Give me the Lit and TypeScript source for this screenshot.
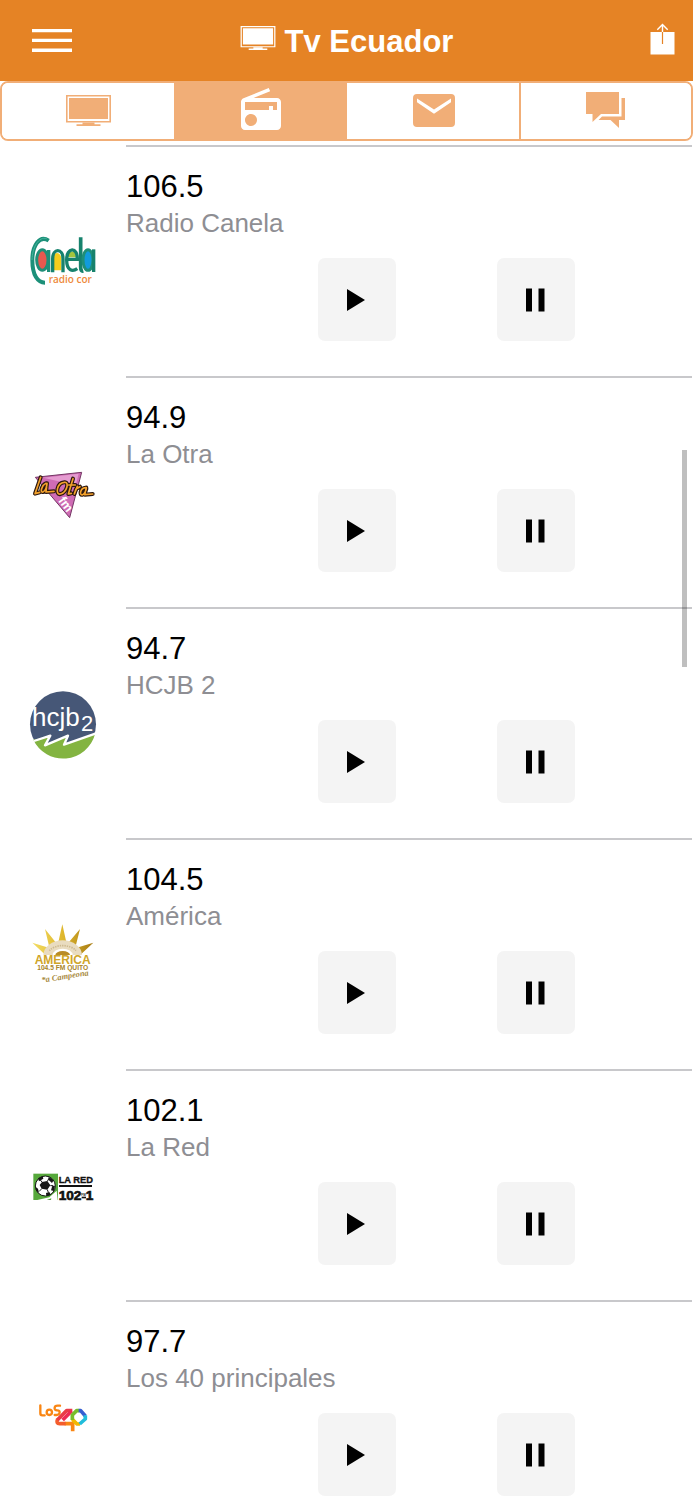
import { LitElement, html, css } from "lit";
import type { TemplateResult } from "lit";
import { customElement, property, state } from "lit/decorators.js";
import { classMap } from "lit/directives/class-map.js";

interface Station {
  freq: string;
  name: string;
  logo: TemplateResult;
}

const tvIcon = (className: string) => html`
  <svg class=${className} viewBox="0 0 45 31" aria-hidden="true">
    <path fill="none" stroke="currentColor" stroke-width="1.6" d="M.8.8h43.4v26H.8z" />
    <path fill="currentColor" d="M3 3h39v21H3zM16.5 27.5h12v1.7h6V31h-24v-1.8h6z" />
  </svg>
`;

const canelaLogo = html`
  <svg class="logo" viewBox="-6 -24 270 270" role="img" aria-label="Canela">
    <path fill="none" stroke="#1c9079" stroke-width="12" d="M86 50C58 32 37 66 37 108c0 46 16 68 38 68" />
    <path fill="none" stroke="#45b39c" stroke-width="3" d="M80 44C56 36 37 70 36 108" />
    <path fill="none" stroke="#1f8f78" stroke-width="10" d="M86 78v66" />
    <ellipse cx="67" cy="108" rx="17" ry="31" fill="#e8584f" stroke="#1f8f78" stroke-width="9" />
    <path fill="#f6cd1c" d="M98 139V106c0-25 26-25 26 0v33z" />
    <path fill="none" stroke="#17826d" stroke-width="10" d="M98 145V104c0-32 31-32 31 0v41" />
    <path fill="#a3c53d" d="M143 100c1-23 25-23 25 0z" />
    <path fill="none" stroke="#17826d" stroke-width="10" d="M143 106h29c1-38-32-38-32 2 0 32 17 36 32 26" />
    <path fill="none" stroke="#17826d" stroke-width="11" d="M182 40v90q0 13 8 11" />
    <ellipse cx="204" cy="108" rx="15" ry="31" fill="#119bdc" stroke="#1f8f78" stroke-width="9" />
    <path fill="none" stroke="#17826d" stroke-width="10" d="M221 76v68" />
    <text x="86" y="176" class="canela-sub">radio cor</text>
  </svg>
`;

const laOtraLogo = html`
  <svg class="logo" viewBox="-6 -38 270 270" role="img" aria-label="La Otra FM">
    <path fill="#cf6cb5" stroke="#733663" stroke-width="3" d="M46 53l139-15-36 136z" />
    <path fill="#e59bd0" d="M70 54l106-12-9 35z" />
    <g fill="none" stroke-linecap="round" stroke-linejoin="round">
      <g stroke="#2b160e" stroke-width="12">
        <path d="M62 53l-17 49 14-4M78 71c-13 6-19 28-9 26 8-2 12-19 12-26l-3 26 24-2" />
        <path d="M133 68c-24 2-27 39-12 35 20-4 28-38 12-35M159 57l-14 46 9-2M146 76h20M172 80l-9 23 5-15 12-7M197 84c-17 1-20 25-9 21 8-3 12-19 11-21l-5 21 24-2" />
      </g>
      <g stroke="#f3a22d" stroke-width="5">
        <path d="M62 53l-17 49 14-4M78 71c-13 6-19 28-9 26 8-2 12-19 12-26l-3 26 24-2" />
        <path d="M133 68c-24 2-27 39-12 35 20-4 28-38 12-35M159 57l-14 46 9-2M146 76h20M172 80l-9 23 5-15 12-7M197 84c-17 1-20 25-9 21 8-3 12-19 11-21l-5 21 24-2" />
      </g>
    </g>
    <text class="otra-fm" transform="translate(113 123) rotate(53)">fm</text>
  </svg>
`;

const hcjbLogo = html`
  <svg class="logo" viewBox="-6 -5 270 270" role="img" aria-label="HCJB 2">
    <circle cx="129" cy="134" r="99" fill="#465777" />
    <path fill="#83b441" d="M40 180l51-10-15 28 68-29-12 28 93-33A99 99 0 0 1 40 180z" />
    <path fill="none" stroke="#fff" stroke-width="7" stroke-linejoin="round" d="M42 184l49-16-16 29 69-29-12 27 94-33" />
    <text x="36" y="138" class="hcjb">hcjb</text>
    <text x="183" y="153" class="hcjb-two">2</text>
  </svg>
`;

const americaLogo = html`
  <svg class="logo" viewBox="-6 -17 270 270" role="img" aria-label="América 104.5 FM Quito">
    <defs>
      <linearGradient id="gold" x1="0" x2="1">
        <stop offset="0" stop-color="#f3dc63" />
        <stop offset=".5" stop-color="#dfb72d" />
        <stop offset="1" stop-color="#a87c14" />
      </linearGradient>
    </defs>
    <g fill="url(#gold)">
      <path d="M127 29l13 58h-26zM75 43l36 45-22 14zM180 43l-15 59-23-14zM37 84l49 15-12 20zM220 84l-37 35-13-20z" />
    </g>
    <path fill="#e9dcc0" d="M70 121a58 44 0 0 1 116 0z" />
    <path fill="none" stroke="#cdb98f" stroke-width="5" stroke-dasharray="4 3" d="M88 108a46 30 0 0 1 80 0" />
    <path fill="#fff" d="M98 121a30 19 0 0 1 60 0z" />
    <path fill="#b98c27" d="M106 121a22 12 0 0 1 44 0z" />
    <text x="128" y="147" class="america">AMERICA</text>
    <text x="128" y="167" class="america-city">104.5 FM QUITO</text>
    <text class="america-tag" transform="translate(66 204) rotate(-9)">*a Campeona</text>
  </svg>
`;

const laRedLogo = html`
  <svg class="logo" viewBox="-6 -71 270 270" role="img" aria-label="La Red 102.1">
    <path fill="#56a83b" d="M40 30h74v79H40z" />
    <path fill="#fff" d="M52 109l36-8 22-20 3 28z" />
    <path fill="#56a83b" d="M80 109l14-5-1 5z" />
    <circle cx="76" cy="67" r="30" fill="#fff" stroke="#161616" stroke-width="3" />
    <path fill="#161616" d="M66 55l16-3 9 13-9 13-17-3-6-11zM54 44l14-7 2 8-13 8zM86 39l15 11-5 8-11-10zM105 66l-3 16-9-2 4-14zM78 88l10-3 4 8-13 4zM46 69l8 6 3 12-8-5z" />
    <path stroke="#161616" stroke-width="3" d="M82 53l5-9M91 66h8M82 78l3 8M65 76l-7 6M66 55l-5-6" />
    <path fill="#111" d="M117 64h99v6h-99z" />
    <text x="116" y="58" class="red-name">LA RED</text>
    <text x="116" y="108" class="red-freq">102</text>
    <text x="184" y="96" class="red-fm">FM</text>
    <path fill="#111" d="M185 99h13v5h-13z" />
    <text x="197" y="108" class="red-freq">1</text>
  </svg>
`;

const los40Logo = html`
  <svg class="logo" viewBox="-6 -68 270 270" role="img" aria-label="Los 40">
    <g fill="none" stroke-width="7" stroke-linejoin="round">
      <g stroke="#f98614">
        <path stroke-linecap="round" d="M61 35v24q0 6 6 6h7M120 36h-7c-12 0-12 14-2 14h1c11 0 8 14-2 14h-6" />
        <circle cx="88" cy="56" r="8" />
        <path stroke-width="11" d="M134 90h24v23" />
      </g>
      <g stroke-width="11">
        <path stroke="#f45e2d" d="M113 76q-6 14 6 14h18" />
        <path stroke="#ea3b47" d="M157 51h-17L112 79" />
        <path stroke="#ed2b53" d="M155 52L128 79" />
        <path stroke="#f2b700" d="M180 91h-9l-14-14" />
        <path stroke="#77bd2a" d="M157 79V64l13-13h8" />
        <path stroke="#355ed1" d="M176 51h6l14 16" />
        <path stroke="#20bddb" d="M196 65v11l-17 15" />
      </g>
    </g>
  </svg>
`;

const STATIONS: Station[] = [
  { freq: "106.5", name: "Radio Canela", logo: canelaLogo },
  { freq: "94.9", name: "La Otra", logo: laOtraLogo },
  { freq: "94.7", name: "HCJB 2", logo: hcjbLogo },
  { freq: "104.5", name: "América", logo: americaLogo },
  { freq: "102.1", name: "La Red", logo: laRedLogo },
  { freq: "97.7", name: "Los 40 principales", logo: los40Logo },
];

const TABS = [
  { id: "tv", label: "Televisión", icon: tvIcon("tab-tv") },
  {
    id: "radio",
    label: "Radio",
    icon: html`<svg class="tab-radio" viewBox="0 0 24 24" aria-hidden="true">
      <path fill="currentColor" d="M3.24 6.15C2.51 6.43 2 7.17 2 8v12c0 1.1.89 2 2 2h16c1.11 0 2-.9 2-2V8c0-1.11-.89-2-2-2H8.3l8.26-3.34L15.88 1 3.24 6.15zM7 20c-1.66 0-3-1.34-3-3s1.34-3 3-3 3 1.34 3 3-1.34 3-3 3zm13-8h-2v-2h-2v2H4V8h16v4z" />
    </svg>`,
  },
  {
    id: "mail",
    label: "Correo",
    icon: html`<svg class="tab-mail" viewBox="0 0 42 33" aria-hidden="true">
      <path fill="currentColor" fill-rule="evenodd" d="M4 0h34a4 4 0 0 1 4 4v25a4 4 0 0 1-4 4H4a4 4 0 0 1-4-4V4a4 4 0 0 1 4-4zM4 4.500v3.800l17 11.400 17-11.400V4.500L21 15.600z" />
    </svg>`,
  },
  {
    id: "chat",
    label: "Mensajes",
    icon: html`<svg class="tab-chat" viewBox="0 0 39 36" aria-hidden="true">
      <path fill="currentColor" d="M0 0h33v22H15l-8.500 8V22H0zM35.500 6H39v22h-6v8l-8.500-8h-12l3.500-3.500h19.500z" />
    </svg>`,
  },
];

@customElement("station-row")
class StationRow extends LitElement {
  @property({ attribute: false }) station!: Station;

  static styles = css`
    :host {
      display: flex;
    }
    .avatar {
      flex: none;
      width: 126px;
      display: flex;
      align-items: center;
      justify-content: center;
    }
    .logo {
      width: 90px;
      height: 90px;
      display: block;
    }
    .body {
      flex: 1;
      margin-right: 1px;
      padding: 22px 0 35px;
      border-top: 2px solid #c8c8cb;
    }
    .freq {
      margin: 0 0 3px;
      font-size: 31px;
      line-height: 36px;
      font-weight: 400;
      color: #000;
    }
    .name {
      margin: 0 0 20px;
      font-size: 26px;
      line-height: 30px;
      color: #8e8e93;
    }
    .controls {
      display: flex;
      justify-content: center;
      gap: 101px;
      padding-left: 74px;
    }
    .control {
      width: 78px;
      height: 83px;
      padding: 0;
      border: 0;
      border-radius: 7px;
      background: #f4f4f4;
      color: #000;
      display: flex;
      align-items: center;
      justify-content: center;
    }
    .glyph {
      width: 20px;
      height: 24px;
    }
    .canela-sub {
      font: 600 30px "Open Sans", sans-serif;
      fill: #ee8a3c;
    }
    .otra-fm {
      font: 700 38px "Liberation Sans", sans-serif;
      fill: #fff;
    }
    .hcjb {
      font: 400 78px "Liberation Sans", sans-serif;
      fill: #fff;
    }
    .hcjb-two {
      font: 400 66px "Liberation Sans", sans-serif;
      fill: #fff;
    }
    .america {
      font: 700 36px "Liberation Sans", sans-serif;
      fill: #cfa528;
      text-anchor: middle;
    }
    .america-city {
      font: 700 20px "Liberation Sans", sans-serif;
      fill: #a98428;
      text-anchor: middle;
    }
    .america-tag {
      font: italic 700 25px "Liberation Serif", serif;
      fill: #a88a3e;
    }
    .red-name {
      font: 700 28px "Liberation Sans", sans-serif;
      fill: #111;
      stroke: #111;
      stroke-width: 1px;
    }
    .red-freq {
      font: 700 41px "Liberation Sans", sans-serif;
      fill: #111;
      stroke: #111;
      stroke-width: 2px;
    }
    .red-fm {
      font: 700 9px "Liberation Sans", sans-serif;
      fill: #111;
    }
  `;

  render() {
    const { freq, name, logo } = this.station;
    return html`
      <div class="avatar">${logo}</div>
      <div class="body">
        <h2 class="freq">${freq}</h2>
        <p class="name">${name}</p>
        <div class="controls">
          <button class="control" type="button" aria-label="Reproducir ${name}">
            <svg class="glyph" viewBox="0 0 20 24" aria-hidden="true">
              <path d="M0 1l18 11L0 23z" />
            </svg>
          </button>
          <button class="control" type="button" aria-label="Pausar ${name}">
            <svg class="glyph" viewBox="0 0 20 24" aria-hidden="true">
              <path d="M0 .5h6v23H0zM12.500 .5h6v23h-6z" />
            </svg>
          </button>
        </div>
      </div>
    `;
  }
}

@customElement("app-root")
class AppRoot extends LitElement {
  @state() private active = "radio";

  static styles = css`
    :host {
      display: flex;
      flex-direction: column;
      position: relative;
      height: 100vh;
      overflow: hidden;
      background: #fff;
      font-family: "Liberation Sans", Arial, sans-serif;
    }
    .bar {
      flex: none;
      display: grid;
      grid-template-columns: 72px 1fr 72px;
      align-items: center;
      height: 81px;
      background: #e58325;
      color: #fff;
    }
    .bar-button {
      height: 80px;
      padding: 0;
      border: 0;
      background: none;
      color: inherit;
      display: flex;
      align-items: center;
      justify-content: flex-end;
    }
    .share-button {
      padding: 0 18px 4px 0;
    }
    .menu-icon {
      width: 40px;
      height: 24px;
    }
    .share-icon {
      width: 25px;
      height: 32px;
    }
    .title {
      margin: 0;
      padding-top: 2px;
      display: flex;
      justify-content: center;
      align-items: center;
      gap: 9px;
      font-size: 31px;
      line-height: 36px;
      font-weight: 700;
    }
    .title-tv {
      width: 36px;
      height: 24px;
      margin-bottom: 8px;
    }
    .tabs {
      flex: none;
      display: grid;
      grid-template-columns: repeat(4, 1fr);
      height: 60px;
      box-sizing: border-box;
      margin-bottom: 4px;
      border: 2px solid #f1ae77;
      border-radius: 8px;
      overflow: hidden;
    }
    .tab {
      padding: 0 0 2px;
      border: 0;
      border-left: 2px solid #f1ae77;
      background: #fff;
      color: #f1ae77;
      display: flex;
      align-items: center;
      justify-content: center;
    }
    .tab:first-child {
      border-left: 0;
    }
    .tab.active {
      background: #f1ae77;
      color: #fff;
    }
    .tab.active + .tab {
      border-left-color: #fff;
    }
    .tab-tv {
      width: 45px;
      height: 31px;
    }
    .tab-radio {
      width: 48px;
      height: 48px;
    }
    .tab-mail {
      width: 42px;
      height: 33px;
    }
    .tab-chat {
      width: 39px;
      height: 36px;
    }
    .list {
      flex: 1;
      min-height: 0;
      margin: 0;
      padding: 0;
      list-style: none;
      overflow-y: auto;
      scrollbar-width: none;
    }
    .scroll-thumb {
      position: absolute;
      top: 30%;
      right: 6px;
      width: 5px;
      height: 217px;
      background: rgba(0, 0, 0, 0.25);
      pointer-events: none;
    }
  `;

  render() {
    return html`
      <header class="bar">
        <button class="bar-button" type="button" aria-label="Menú">
          <svg class="menu-icon" viewBox="0 0 40 24" aria-hidden="true">
            <path fill="currentColor" d="M0 0h40v3.300H0zM0 9.800h40v3.300H0zM0 19.600h40v3.300H0z" />
          </svg>
        </button>
        <h1 class="title">${tvIcon("title-tv")}<span>Tv Ecuador</span></h1>
        <button class="bar-button share-button" type="button" aria-label="Compartir">
          <svg class="share-icon" viewBox="0 0 25 32" aria-hidden="true">
            <path fill="currentColor" d="M.5 9h24v22.500H.5z" />
            <path fill="none" stroke="currentColor" stroke-width="1.400" d="M12.500 9V1.500M7.300 6.700l5.200-5.200 5.200 5.200" />
            <path fill="none" stroke="#e58325" stroke-width="1.200" d="M12.500 9v12" />
          </svg>
        </button>
      </header>
      <nav class="tabs">
        ${TABS.map(
          (tab) => html`
            <button
              type="button"
              class=${classMap({ tab: true, active: tab.id === this.active })}
              aria-label=${tab.label}
              @click=${() => (this.active = tab.id)}
            >
              ${tab.icon}
            </button>
          `,
        )}
      </nav>
      <ul class="list">
        ${STATIONS.map((s) => html`<li><station-row .station=${s}></station-row></li>`)}
      </ul>
      <div class="scroll-thumb"></div>
    `;
  }
}
